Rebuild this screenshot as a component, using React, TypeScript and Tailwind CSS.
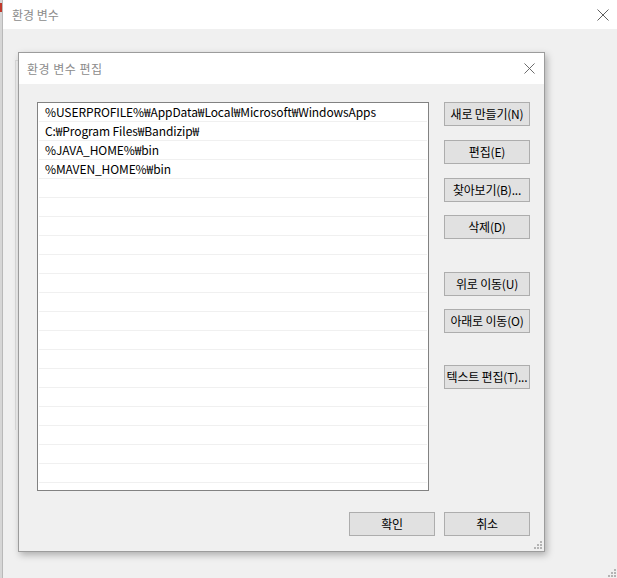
import React from "react";

const font = { fontFamily: '"Noto Sans CJK KR", "Noto Sans", sans-serif' };

const paths = [
  "%USERPROFILE%₩AppData₩Local₩Microsoft₩WindowsApps",
  "C:₩Program Files₩Bandizip₩",
  "%JAVA_HOME%₩bin",
  "%MAVEN_HOME%₩bin",
];

function CloseX({ size = 12 }: { size?: number }) {
  return (
    <svg width={size} height={size} viewBox="0 0 12 12" className="block">
      <path d="M0.5 0.5 L11.5 11.5 M11.5 0.5 L0.5 11.5" stroke="#5f5f5f" strokeWidth="1" fill="none" />
    </svg>
  );
}

function Grip() {
  return (
    <svg width="8" height="8" viewBox="0 0 8 8" className="block">
      <rect x="6" y="0" width="2" height="2" fill="#b4b4b4" />
      <rect x="3" y="3" width="2" height="2" fill="#b4b4b4" />
      <rect x="6" y="3" width="2" height="2" fill="#b4b4b4" />
      <rect x="0" y="6" width="2" height="2" fill="#b4b4b4" />
      <rect x="3" y="6" width="2" height="2" fill="#b4b4b4" />
      <rect x="6" y="6" width="2" height="2" fill="#b4b4b4" />
    </svg>
  );
}

function Btn({ label, className = "" }: { label: string; className?: string }) {
  return (
    <button
      type="button"
      className={
        "h-[24px] w-[86px] shrink-0 border border-[#adadad] bg-[#e1e1e1] text-[12px] leading-none text-black whitespace-nowrap px-0 tracking-[-0.2px] " +
        className
      }
    >
      {label}
    </button>
  );
}

export default function App() {
  const rows = Array.from({ length: 20 }, (_, i) => paths[i] ?? "");

  return (
    <div className="relative w-[617px] h-[578px] overflow-hidden bg-[#f0f0f0]" style={font}>
      {/* sliver of window behind */}
      <div className="absolute left-0 top-0 h-full w-[2px] bg-[#d6d6d6]" />
      <div className="absolute left-0 top-[3px] h-[9px] w-[2px] bg-[#c0392b]" />

      {/* outer window */}
      <div className="absolute left-[2px] top-0 right-0 bottom-0 flex flex-col border-l border-[#b9b9b9] bg-[#f0f0f0]">
        <div className="flex h-[29px] items-center justify-between bg-white pl-[9px] pr-[8px]">
          <span className="text-[12px] text-[#8c8c8c]">환경 변수</span>
          <CloseX />
        </div>
        <div className="relative flex-1">
          <div className="absolute left-[12px] top-[31px] h-[370px] w-[4px] border-l border-t border-[#dadada]" />
          <div className="absolute right-[1px] bottom-[1px]">
            <Grip />
          </div>
        </div>
      </div>

      {/* edit dialog */}
      <div className="absolute left-[18px] top-[52px] flex h-[500px] w-[527px] flex-col border border-[#9c9c9c] bg-[#f0f0f0] shadow-[2px_3px_7px_rgba(0,0,0,0.28)]">
        <div className="flex h-[31px] shrink-0 items-center justify-between bg-white pl-[8px] pr-[9px]">
          <span className="text-[12px] text-[#8c8c8c] tracking-[0.5px]">환경 변수 편집</span>
          <CloseX size={11} />
        </div>

        <div className="flex flex-1 flex-col pl-[18px] pr-[14px] pt-[18px]">
          <div className="flex gap-[15px]">
            <div className="h-[389px] w-[392px] shrink-0 overflow-hidden border border-[#828282] bg-white px-[1px]">
              {rows.map((r, i) => (
                <div
                  key={i}
                  className="h-[19px] border-b border-[#f0f0f0] pl-[6px] text-[12px] leading-[18px] tracking-[-0.1px] text-black whitespace-nowrap"
                >
                  {r}
                </div>
              ))}
            </div>
            <div className="flex flex-col">
              <Btn label="새로 만들기(N)" />
              <Btn label="편집(E)" className="mt-[14px]" />
              <Btn label="찾아보기(B)..." className="mt-[14px]" />
              <Btn label="삭제(D)" className="mt-[13px]" />
              <Btn label="위로 이동(U)" className="mt-[33px]" />
              <Btn label="아래로 이동(O)" className="mt-[13px]" />
              <Btn label="텍스트 편집(T)..." className="mt-[32px]" />
            </div>
          </div>
          <div className="mt-[21px] flex justify-end gap-[9px]">
            <Btn label="확인" />
            <Btn label="취소" />
          </div>
        </div>
        <div className="absolute right-[2px] bottom-[2px]">
          <Grip />
        </div>
      </div>
    </div>
  );
}
